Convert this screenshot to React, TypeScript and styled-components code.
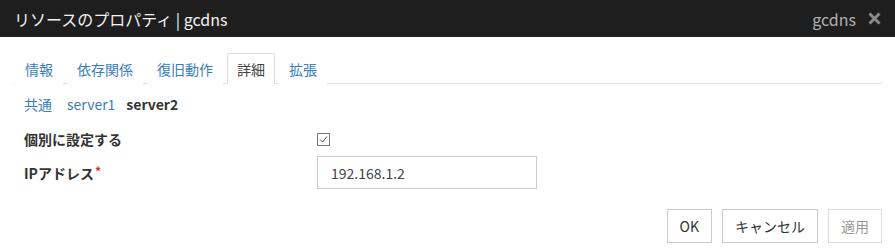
import React from 'react'
import styled, { createGlobalStyle } from 'styled-components'

//#region styled components
const GlobalStyle = createGlobalStyle`
  body {
    margin: 0;
    background: #fff;
    font-family: 'Noto Sans CJK JP', 'Noto Sans', sans-serif;
    color: #333;
  }
`
const Dialog = styled('div')`
  width: 895px;
  height: 250px;
  background: #fff;
`
const Header = styled('div')`
  height: 37px;
  background-color: #1e1e1e;
  display: flex;
  align-items: center;
  justify-content: space-between;
  padding: 0 14px;
`
const Title = styled('div')`
  color: #f2f2f2;
  font-size: 16px;
`
const HeaderRight = styled('div')`
  display: flex;
  align-items: center;
  gap: 12px;
`
const ResourceName = styled('span')`
  color: #b0b0b0;
  font-size: 16px;
`
const CloseIcon = styled('svg')`
  width: 13px;
  height: 13px;
  display: block;
`
const Body = styled('div')`
  padding: 16px 13px 0 14px;
`
const Tabs = styled('ul')`
  display: flex;
  gap: 4px;
  margin: 0;
  padding: 0 0 0 1px;
  list-style: none;
  border-bottom: 1px solid #ddd;
`
const Tab = styled('li')<{ $active?: boolean }>`
  height: 29px;
  padding: 0 9px;
  display: flex;
  align-items: center;
  font-size: 14px;
  margin-bottom: -1px;
  border: 1px solid ${(p) => (p.$active ? '#ddd' : 'transparent')};
  border-bottom-color: ${(p) => (p.$active ? '#fff' : 'transparent')};
  border-radius: 2px 2px 0 0;
  background: #fff;
  color: ${(p) => (p.$active ? '#444' : '#3a7dbd')};
`
const SubNav = styled('div')`
  display: flex;
  align-items: center;
  height: 39px;
  padding-left: 10px;
  font-size: 14px;
`
const SubLink = styled('span')<{ $current?: boolean; $gap: number }>`
  margin-right: ${(p) => p.$gap}px;
  color: ${(p) => (p.$current ? '#333' : '#3a7dbd')};
  font-weight: ${(p) => (p.$current ? 'bold' : 'normal')};
`
const Form = styled('div')`
  display: grid;
  grid-template-columns: 293px 220px;
  row-gap: 7px;
  padding-left: 10px;
  margin-top: 6px;
`
const Label = styled('div')`
  display: flex;
  align-items: center;
  font-size: 14px;
  font-weight: bold;
  color: #333;
`
const Required = styled('sup')`
  color: #d0321e;
  font-size: 12px;
  margin-left: 1px;
  position: relative;
  top: -2px;
`
const CheckCell = styled('div')`
  display: flex;
  align-items: center;
  height: 20px;
`
const CheckBox = styled('span')`
  width: 11px;
  height: 11px;
  border: 1px solid #777;
  display: flex;
  align-items: center;
  justify-content: center;
`
const TextInput = styled('input')`
  box-sizing: border-box;
  width: 220px;
  height: 33px;
  border: 1px solid #ccc;
  padding: 0 13px;
  font-family: 'Noto Sans CJK JP', 'Noto Sans', sans-serif;
  font-size: 14px;
  color: #444;
  outline: none;
`
const Footer = styled('div')`
  display: flex;
  justify-content: flex-end;
  gap: 10px;
  margin-top: 20px;
`
const Button = styled('button')<{ $disabled?: boolean }>`
  box-sizing: border-box;
  height: 34px;
  padding: 0 12px;
  background: #fff;
  border: 1px solid #ccc;
  font-family: 'Noto Sans CJK JP', 'Noto Sans', sans-serif;
  font-size: 14px;
  color: ${(p) => (p.$disabled ? '#999' : '#333')};
  border-color: ${(p) => (p.$disabled ? '#ddd' : '#ccc')};
`
//#endregion

const tabs = ['情報', '依存関係', '復旧動作', '詳細', '拡張']

const App = () => {
  return (
    <Dialog>
      <GlobalStyle />
      <Header>
        <Title>リソースのプロパティ | gcdns</Title>
        <HeaderRight>
          <ResourceName>gcdns</ResourceName>
          <CloseIcon viewBox="0 0 13 13">
            <path d="M1.5 1.5 L11.5 11.5 M11.5 1.5 L1.5 11.5" stroke="#8a8a8a" strokeWidth="3" />
          </CloseIcon>
        </HeaderRight>
      </Header>
      <Body>
        <Tabs>
          {tabs.map((t) => (
            <Tab key={t} $active={t === '詳細'}>
              {t}
            </Tab>
          ))}
        </Tabs>
        <SubNav>
          <SubLink $gap={15}>共通</SubLink>
          <SubLink $gap={11}>server1</SubLink>
          <SubLink $current $gap={0}>
            server2
          </SubLink>
        </SubNav>
        <Form>
          <Label>個別に設定する</Label>
          <CheckCell>
            <CheckBox>
              <svg width="9" height="9" viewBox="0 0 9 9">
                <path d="M1 4.5 L3.5 7 L8 1.5" fill="none" stroke="#555" strokeWidth="1" />
              </svg>
            </CheckBox>
          </CheckCell>
          <Label>
            IPアドレス<Required>*</Required>
          </Label>
          <TextInput defaultValue="192.168.1.2" />
        </Form>
        <Footer>
          <Button>OK</Button>
          <Button>キャンセル</Button>
          <Button $disabled>適用</Button>
        </Footer>
      </Body>
    </Dialog>
  )
}

export default App
